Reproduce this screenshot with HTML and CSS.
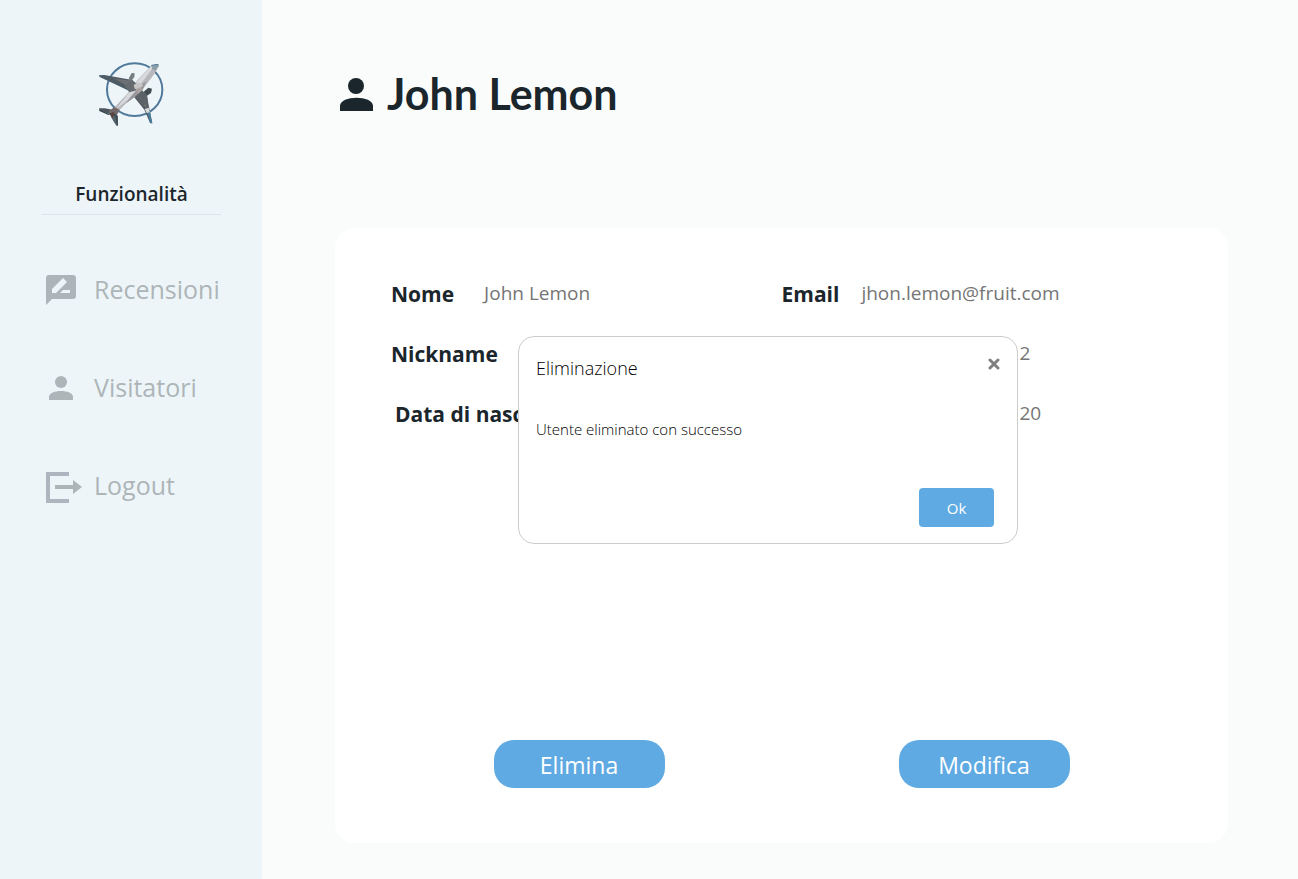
FILE: index.html
```html
<!DOCTYPE html>
<html lang="it">
<head>
<meta charset="utf-8">
<meta name="viewport" content="width=device-width, initial-scale=1">
<title>John Lemon</title>
<link rel="stylesheet" href="styles.css">
</head>
<body class="page">
<aside class="sidebar">
  <svg class="logo" viewBox="0 0 252 240" aria-hidden="true">
    <ellipse cx="134" cy="104" rx="83" ry="79" fill="none" stroke="#50799a" stroke-width="6"/>
    <path d="M27 61L43 60 127 75 150 96 132 115 98 98 29 66Z" fill="#515b63"/>
    <path d="M70 70L122 77 146 98 132 109 98 85Z" fill="#6d7074"/>
    <path d="M28 62L102 98 130 113" fill="none" stroke="#3f6178" stroke-width="2"/>
    <path d="M128 121L153 104 170 118 177 156 187 205 180 204 163 164Z" fill="#555c61"/>
    <path d="M144 118L158 110 168 128 170 158 152 144Z" fill="#747473"/>
    <path d="M164 162L176 158 180 173 170 174Z" fill="#d7dada"/>
    <path d="M172 174L180 172 187 205 181 205Z" fill="#477c9c"/>
    <path d="M117 68L125 54 134 55 133 66 124 78 116 77Z" fill="#777e82"/>
    <path d="M161 110L175 98 186 101 183 114 170 123Z" fill="#414b52"/>
    <path d="M205 27L207 34 190 61 164 95 146 117 106 147 79 175 68 181 72 159 113 115 130 90 151 65 184 32Z" fill="#b8b7bb"/>
    <path d="M151 67L184 34 193 33 161 76 147 93 121 129 76 164 113 117Z" fill="#d7d8dc"/>
    <path d="M184 32L205 27 206 33 196 47 187 43Z" fill="#8d9fa9"/>
    <path d="M184 31L204 28" stroke="#497797" stroke-width="3"/>
    <path d="M122 76L147 90 140 106 118 112 104 94Z" fill="#666b70"/>
    <path d="M152 91L169 78 158 105 143 119 108 145 121 126 140 106Z" fill="#99979a"/>
    <path d="M131 90L145 82 160 91 146 104 134 101Z" fill="#c8c5c5"/>
    <path d="M137 103L151 97 160 105 144 115Z" fill="#aaa3a1"/>
    <path d="M136 124L156 108 171 119 174 148 158 150Z" fill="#5d6266"/>
    <path d="M27 160L44 160 75 166 77 174 57 176 28 167Z" fill="#4d565d"/>
    <path d="M56 170L73 155 89 165 82 178 65 187Z" fill="#73696a"/>
    <path d="M62 184L76 174 84 183 84 212 80 212 72 202Z" fill="#56616a"/>
    <path d="M29 166L55 178 69 175 79 185 82 211" fill="none" stroke="#394953" stroke-width="4"/>
    <path d="M60 179L69 170 74 177 67 188Z" fill="#5c4039"/>
  </svg>
  <h2 class="menu-title">Funzionalità</h2>
  <nav class="menu">
    <a class="menu-item" href="#recensioni">
      <svg class="menu-icon" viewBox="0 0 36 36" aria-hidden="true"><path fill-rule="evenodd" fill="#adb5bb" d="M3 4H27Q30 4 30 7V25Q30 28 27 28H6L0 34V7Q0 4 3 4ZM6 22H10L21 11 17 7 6 18ZM14 22H24V19H17Z"/></svg>
      <span>Recensioni</span>
    </a>
    <a class="menu-item" href="#visitatori">
      <svg class="menu-icon" viewBox="0 0 36 36" aria-hidden="true"><circle cx="15" cy="13" r="6" fill="#adb5b9"/><path d="M3 31V28C3 20 27 20 27 28V31Z" fill="#adb5b9"/></svg>
      <span>Visitatori</span>
    </a>
    <a class="menu-item" href="#logout">
      <svg class="menu-icon" viewBox="0 0 36 36" aria-hidden="true"><path d="M23 7H2V34H23" fill="none" stroke="#adb5be" stroke-width="4"/><path d="M9 18H27V13L36 20 27 27V22H9Z" fill="#adb5b7"/></svg>
      <span>Logout</span>
    </a>
  </nav>
</aside>
<main class="content">
  <header class="heading">
    <svg class="heading-icon" viewBox="0 0 33 33" aria-hidden="true"><circle cx="16" cy="8" r="8" fill="#1b262c"/><path d="M0 33V28C0 17 33 17 33 28V33Z" fill="#1b262c"/></svg>
    <h1 class="name">John Lemon</h1>
  </header>
  <section class="card">
    <div class="details">
      <dl class="fields fields-left">
        <div class="field"><dt class="label">Nome</dt><dd class="value">John Lemon</dd></div>
        <div class="field"><dt class="label">Nickname</dt></div>
        <div class="field"><dt class="label label-date">Data di nascita</dt></div>
      </dl>
      <dl class="fields">
        <div class="field"><dt class="label">Email</dt><dd class="value value-email">jhon.lemon@fruit.com</dd></div>
        <div class="field"><dd class="value value-far">2</dd></div>
        <div class="field"><dd class="value value-far">20</dd></div>
      </dl>
    </div>
    <div class="actions">
      <button class="action" type="button">Elimina</button>
      <button class="action" type="button">Modifica</button>
    </div>
  </section>
</main>
<div class="dialog" role="dialog" aria-labelledby="dialog-title">
  <div class="dialog-head">
    <h2 class="dialog-title" id="dialog-title">Eliminazione</h2>
    <button class="close" type="button" aria-label="Chiudi"><svg class="close-icon" viewBox="0 0 12 12" aria-hidden="true"><path d="M2 2L10 10M10 2L2 10" stroke="#808080" stroke-width="3" stroke-linecap="round"/></svg></button>
  </div>
  <p class="message">Utente eliminato con successo</p>
  <button class="ok" type="button">Ok</button>
</div>
</body>
</html>
```
FILE: styles.css
```css
* { box-sizing: border-box; }
.page {
  margin: 0;
  min-height: 100vh;
  display: flex;
  background: #fafcfc;
  color: #1b262c;
  font-family: "Open Sans", "Noto Sans", sans-serif;
}
.sidebar {
  flex: 0 0 262px;
  padding: 55px 41px 0 42px;
  background: #edf5f9;
}
.logo { display: block; width: 84px; height: 80px; margin: 0 auto; }
.menu-title {
  margin: 44px 0 0;
  padding: 0 0 5px;
  border-bottom: 1px solid #dae7ea;
  font-size: 19px;
  line-height: 30px;
  font-weight: 600;
  text-align: center;
}
.menu { display: flex; flex-direction: column; gap: 62px; margin-top: 56px; padding-left: 4px; }
.menu-item {
  display: flex;
  align-items: center;
  gap: 12px;
  color: #adb5b8;
  font-size: 25px;
  line-height: 36px;
  font-weight: 500;
  text-decoration: none;
}
.menu-icon { flex: none; width: 36px; height: 36px; }
.content {
  flex: 1;
  display: flex;
  flex-direction: column;
  padding: 64px 70px 36px 73px;
}
.heading { display: flex; align-items: center; gap: 14px; padding-left: 5px; }
.heading-icon { width: 33px; height: 33px; }
.name {
  margin: 0;
  font-family: Lato, sans-serif;
  font-size: 43px;
  line-height: 60px;
  font-weight: 700;
}
.card {
  flex: 1;
  display: flex;
  flex-direction: column;
  justify-content: space-between;
  margin-top: 104px;
  padding: 51px 0 55px;
  border-radius: 20px;
  background: #fff;
}
.details { display: grid; grid-template-columns: 1fr 1fr; }
.fields { display: grid; gap: 30px; margin: 0; }
.fields-left { padding-left: 56px; }
.field { display: flex; align-items: flex-start; height: 30px; }
.label { font-size: 21px; line-height: 30px; font-weight: 700; white-space: nowrap; }
.label-date { padding-left: 4px; }
.value { margin: 0 0 0 30px; color: #757575; font-size: 19px; line-height: 28px; }
.value-email { margin-left: 22px; }
.value-far { margin-left: 238px; }
.actions { display: flex; justify-content: center; gap: 234px; }
.action {
  width: 171px;
  height: 48px;
  padding: 2px 0 0;
  border: 0;
  border-radius: 20px;
  background: #5faae2;
  color: #fff;
  font: 400 23px/46px "Open Sans", "Noto Sans", sans-serif;
}
.dialog {
  position: fixed;
  top: 336px;
  left: 518px;
  width: 500px;
  padding: 16px 17px;
  border: 1px solid #ccc;
  border-radius: 16px;
  background: #fff;
  color: #000;
}
.dialog-head { display: flex; justify-content: space-between; align-items: flex-start; }
.dialog-title { margin: 0; font-size: 18px; line-height: 30px; font-weight: 300; }
.close { display: flex; padding: 5px 0; border: 0; background: none; }
.close-icon { width: 12px; height: 12px; }
.message { margin: 34px 0 46px; font-size: 15px; line-height: 25px; font-weight: 300; }
.ok {
  display: block;
  width: 75px;
  height: 39px;
  margin: 0 6px 0 auto;
  padding: 2px 0 0;
  border: 0;
  border-radius: 4px;
  background: #5faae2;
  color: #fff;
  font: 400 15px/37px "Open Sans", "Noto Sans", sans-serif;
}
```
